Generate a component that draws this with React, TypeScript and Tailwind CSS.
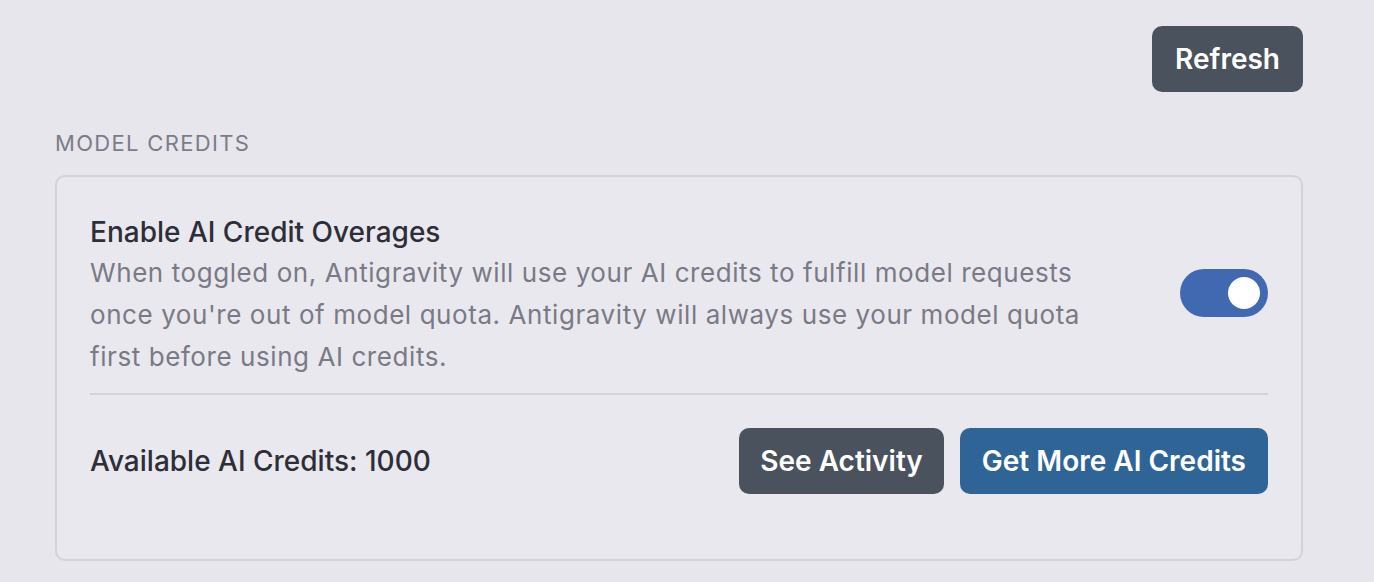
import React from "react";

export default function App() {
    const [enabled, setEnabled] = React.useState(true);

    return (
        <div className="min-h-screen bg-[#e7e6ed] pl-[55px] pr-[71px] pt-[26px] font-['Inter',sans-serif]">
            <div className="flex justify-end">
                <button className="h-[66px] rounded-[10px] bg-[#4a525e] px-[23px] text-[28px] font-semibold text-white">
                    Refresh
                </button>
            </div>

            <p className="mt-[36px] mb-[17px] text-[22px] leading-[30px] tracking-[0.06em] text-[#7c7c88]">
                MODEL CREDITS
            </p>

            <div className="rounded-[10px] border-2 border-[#d3d2da] bg-[#e9e8ef] px-[33px] pt-[37px] pb-[65px]">
                <div className="flex items-center justify-between gap-8">
                    <div className="flex-1">
                        <p className="text-[28px] leading-[36px] font-medium text-[#2e2e38]">
                            Enable AI Credit Overages
                        </p>
                        <p className="mt-[2px] max-w-[1010px] text-[26px] leading-[42px] tracking-[0.022em] text-[#7a7a86]">
                            When toggled on, Antigravity will use your AI credits to fulfill model requests
                            once you're out of model quota. Antigravity will always use your model quota
                            first before using AI credits.
                        </p>
                    </div>
                    <button
                        onClick={() => setEnabled(!enabled)}
                        className={`mb-[6px] flex h-[48px] w-[88px] shrink-0 items-center rounded-full px-[8px] ${enabled ? "justify-end bg-[#4169b1]" : "justify-start bg-[#c4c3cc]"}`}
                    >
                        <span className="block h-[32px] w-[32px] rounded-full bg-white" />
                    </button>
                </div>

                <div className="mt-[15px] h-[2px] bg-[#d3d2da]" />

                <div className="mt-[33px] flex items-center justify-between">
                    <p className="text-[28px] leading-[36px] font-medium text-[#2e2e38]">
                        Available AI Credits: 1000
                    </p>
                    <div className="flex gap-4">
                        <button className="h-[66px] rounded-[10px] bg-[#4a525e] px-[21px] text-[28px] font-semibold text-white">
                            See Activity
                        </button>
                        <button className="h-[66px] rounded-[10px] bg-[#2f6497] px-[22px] text-[28px] font-semibold text-white">
                            Get More AI Credits
                        </button>
                    </div>
                </div>
            </div>
        </div>
    );
}
